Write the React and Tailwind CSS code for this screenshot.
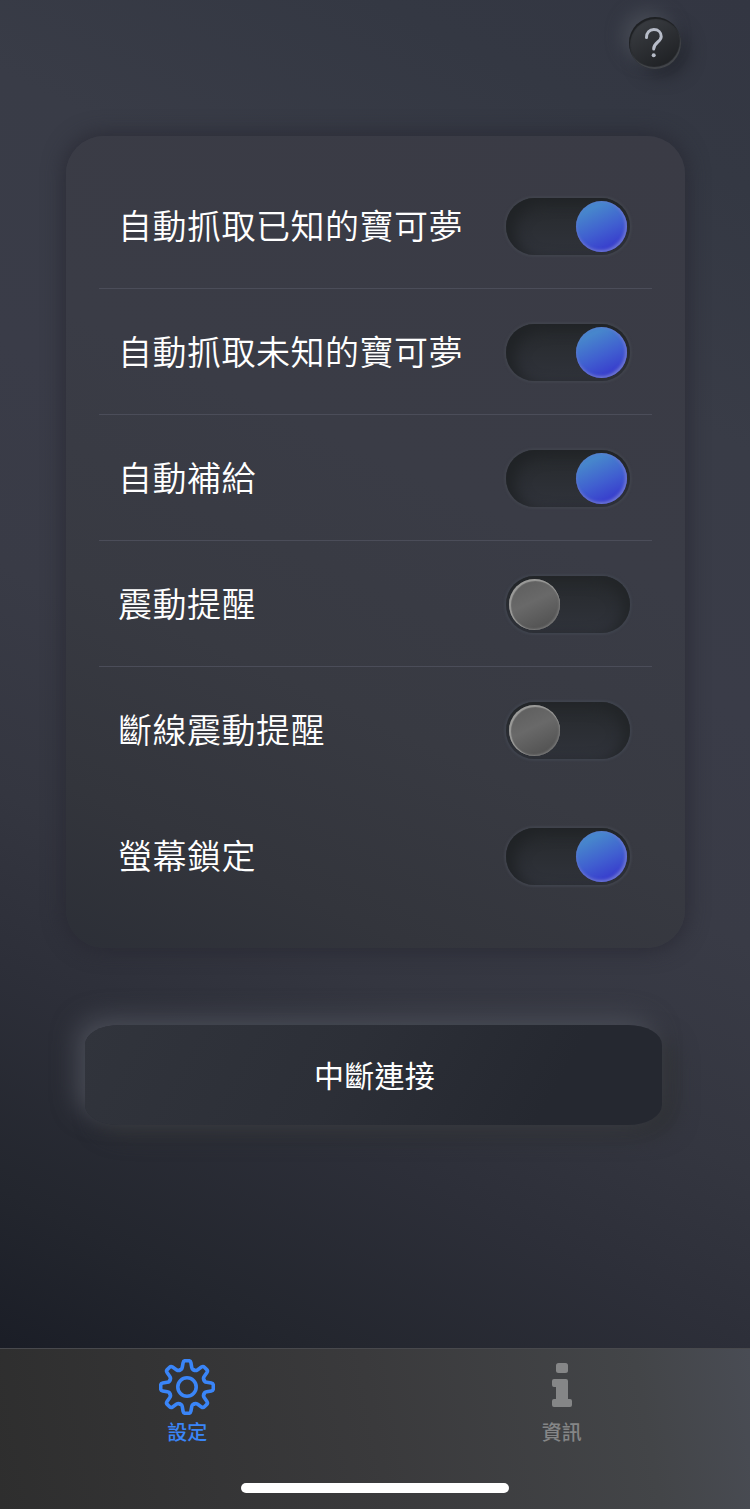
import { useState } from 'react';

const SETTINGS = [
  { id: 'catchKnown', label: '自動抓取已知的寶可夢', on: true, divider: true },
  { id: 'catchUnknown', label: '自動抓取未知的寶可夢', on: true, divider: true },
  { id: 'supply', label: '自動補給', on: true, divider: true },
  { id: 'vibrate', label: '震動提醒', on: false, divider: true },
  { id: 'vibrateDisconnect', label: '斷線震動提醒', on: false, divider: false },
  { id: 'screenLock', label: '螢幕鎖定', on: true, divider: false }
];

const TEETH = [0, 45, 90, 135, 180, 225, 270, 315];

const GearIcon = () => (
  <svg width="56" height="56" viewBox="-28 -28 56 56" fill="none" stroke="currentColor" strokeWidth="3.6" strokeLinecap="round" strokeLinejoin="round">
    <circle r="9.2" />
    {TEETH.map(angle => (
      <path
        key={angle}
        transform={`rotate(${angle})`}
        d="M-7.05 -17Q-5.2 -17.2 -4.7 -19.8L-3.9 -24.3Q-3.5 -26.3 -1.7 -26.3H1.7Q3.5 -26.3 3.9 -24.3L4.7 -19.8Q5.2 -17.2 7.05 -17"
      />
    ))}
  </svg>
);

const InfoIcon = () => (
  <svg width="20" height="44" viewBox="0 0 20 44" fill="currentColor">
    <rect x="4" y="0" width="12" height="10" rx="2.5" />
    <path d="M2 16H14Q16 16 16 18V36H18Q20 36 20 38V42Q20 44 18 44H2Q0 44 0 42V38Q0 36 2 36H4V24H2Q0 24 0 22V18Q0 16 2 16Z" />
  </svg>
);

const Toggle = ({ on, onChange }) => (
  <button
    type="button"
    role="switch"
    aria-checked={on}
    onClick={onChange}
    className={`mt-[2px] flex h-[57px] w-[124px] shrink-0 items-center rounded-full bg-linear-to-b from-[#26292c] to-[#30333b] ${
      on
        ? 'justify-end pr-[3px] shadow-[0_0_2px_2px_#40434c,inset_9px_5px_14px_#202326]'
        : 'justify-start pl-[3px] shadow-[0_0_2px_2px_#3f434d,inset_-7px_4px_14px_#222528]'
    }`}
  >
    {on ? (
      <span className="size-[51px] rounded-full bg-linear-[155deg,#4786cc_20%,#405fd0_55%,#3636cc_90%] shadow-[inset_-1px_-1px_3px_1px_#6c76d2]" />
    ) : (
      <span className="size-[51px] rounded-full bg-linear-[155deg,#606060_15%,#696969_45%,#515151_90%] shadow-[inset_1px_1px_1px_1px_#9c9c9a,inset_-1px_-1px_2px_#777777]" />
    )}
  </button>
);

const SettingRow = ({ item, on, onToggle }) => (
  <div className={`flex h-[126px] items-center justify-between border-b pr-[22px] pl-[19px] ${item.divider ? 'border-[#4b4d59]' : 'border-transparent'}`}>
    <span className="pb-[2px] text-[34px] leading-none font-[350] tracking-[0.5px] whitespace-nowrap text-white">{item.label}</span>
    <Toggle on={on} onChange={onToggle} />
  </div>
);

const App = () => {
  const [values, setValues] = useState(() =>
    Object.fromEntries(SETTINGS.map(item => [item.id, item.on]))
  );

  const toggle = id => setValues(prev => ({ ...prev, [id]: !prev[id] }));

  return (
    <div className="flex h-[1509px] w-[750px] flex-col overflow-hidden bg-[linear-gradient(27deg,#1a1d26_8%,#23262e_17%,#2d2f39_29%,#343640_38%,#393b46_50%,#3a3c48_62%,#393c47_76%,#343843_90%,#333642_100%)] font-['Noto_Sans_CJK_TC',sans-serif]">
      <header className="flex h-[136px] shrink-0 justify-end pt-[17px] pr-[69px]">
        <button
          type="button"
          className="flex size-[52px] items-center justify-center rounded-full bg-linear-[150deg,#3a3d42_10%,#1e2023_90%] pr-[2px] shadow-[inset_1px_2px_1px_#1e2023,inset_-1px_-2px_1px_#43464b,-7px_-7px_16px_#444852,8px_8px_16px_#272a33]"
        >
          <svg width="18" height="30" viewBox="0 0 18 30" fill="none" stroke="#b7bcc8" strokeWidth="3" strokeLinecap="round">
            <path d="M1.5 9.5C1.5 4.5 4.4 1.6 8.8 1.6C13.2 1.6 16.2 4.5 16.2 8.5C16.2 14 8.7 14.2 8.7 21" />
            <circle cx="8.7" cy="27.2" r="2" fill="#b7bcc8" stroke="none" />
          </svg>
        </button>
      </header>

      <section className="mr-[65px] ml-[66px] h-[812px] shrink-0 rounded-[38px] bg-linear-[25deg,#2c2f37_0%,#33353c_15%,#383a42_34%,#3a3c46_58%,#3a3b45_100%] px-[33px] pt-[27px] shadow-[0_0_20px_3px_#262731b3]">
        {SETTINGS.map(item => (
          <SettingRow key={item.id} item={item} on={values[item.id]} onToggle={() => toggle(item.id)} />
        ))}
      </section>

      <button
        type="button"
        className="mt-[77px] ml-[85px] flex h-[100px] w-[577px] shrink-0 items-center justify-center rounded-[34px/20px] bg-linear-[120deg,#31343c_0%,#2c2f37_45%,#252830_80%] pb-[2px] pl-[2px] text-[30px] leading-none tracking-[0.2px] text-white shadow-[-8px_-8px_24px_#484b55,12px_10px_22px_#2f3135]"
      >
        中斷連接
      </button>

      <nav className="mt-auto flex h-[161px] shrink-0 flex-col border-t border-[#48494d] bg-linear-[80deg,#2e2e2e_0%,#3a3a3c_50%,#434548_85%,#494c54_100%]">
        <div className="grid grid-cols-2 pr-[1px]">
          <a className="flex flex-col items-center pt-[10px] text-[#3a85f8]">
            <GearIcon />
            <span className="mt-[7px] text-[20px] leading-[20px] font-medium">設定</span>
          </a>
          <a className="flex flex-col items-center pt-[14px] text-[#858687]">
            <InfoIcon />
            <span className="mt-[15px] text-[20px] leading-[20px] font-medium">資訊</span>
          </a>
        </div>
        <div className="mx-auto mt-auto mb-4 h-[10px] w-[268px] rounded-full bg-white" />
      </nav>
    </div>
  );
};

export default App;
